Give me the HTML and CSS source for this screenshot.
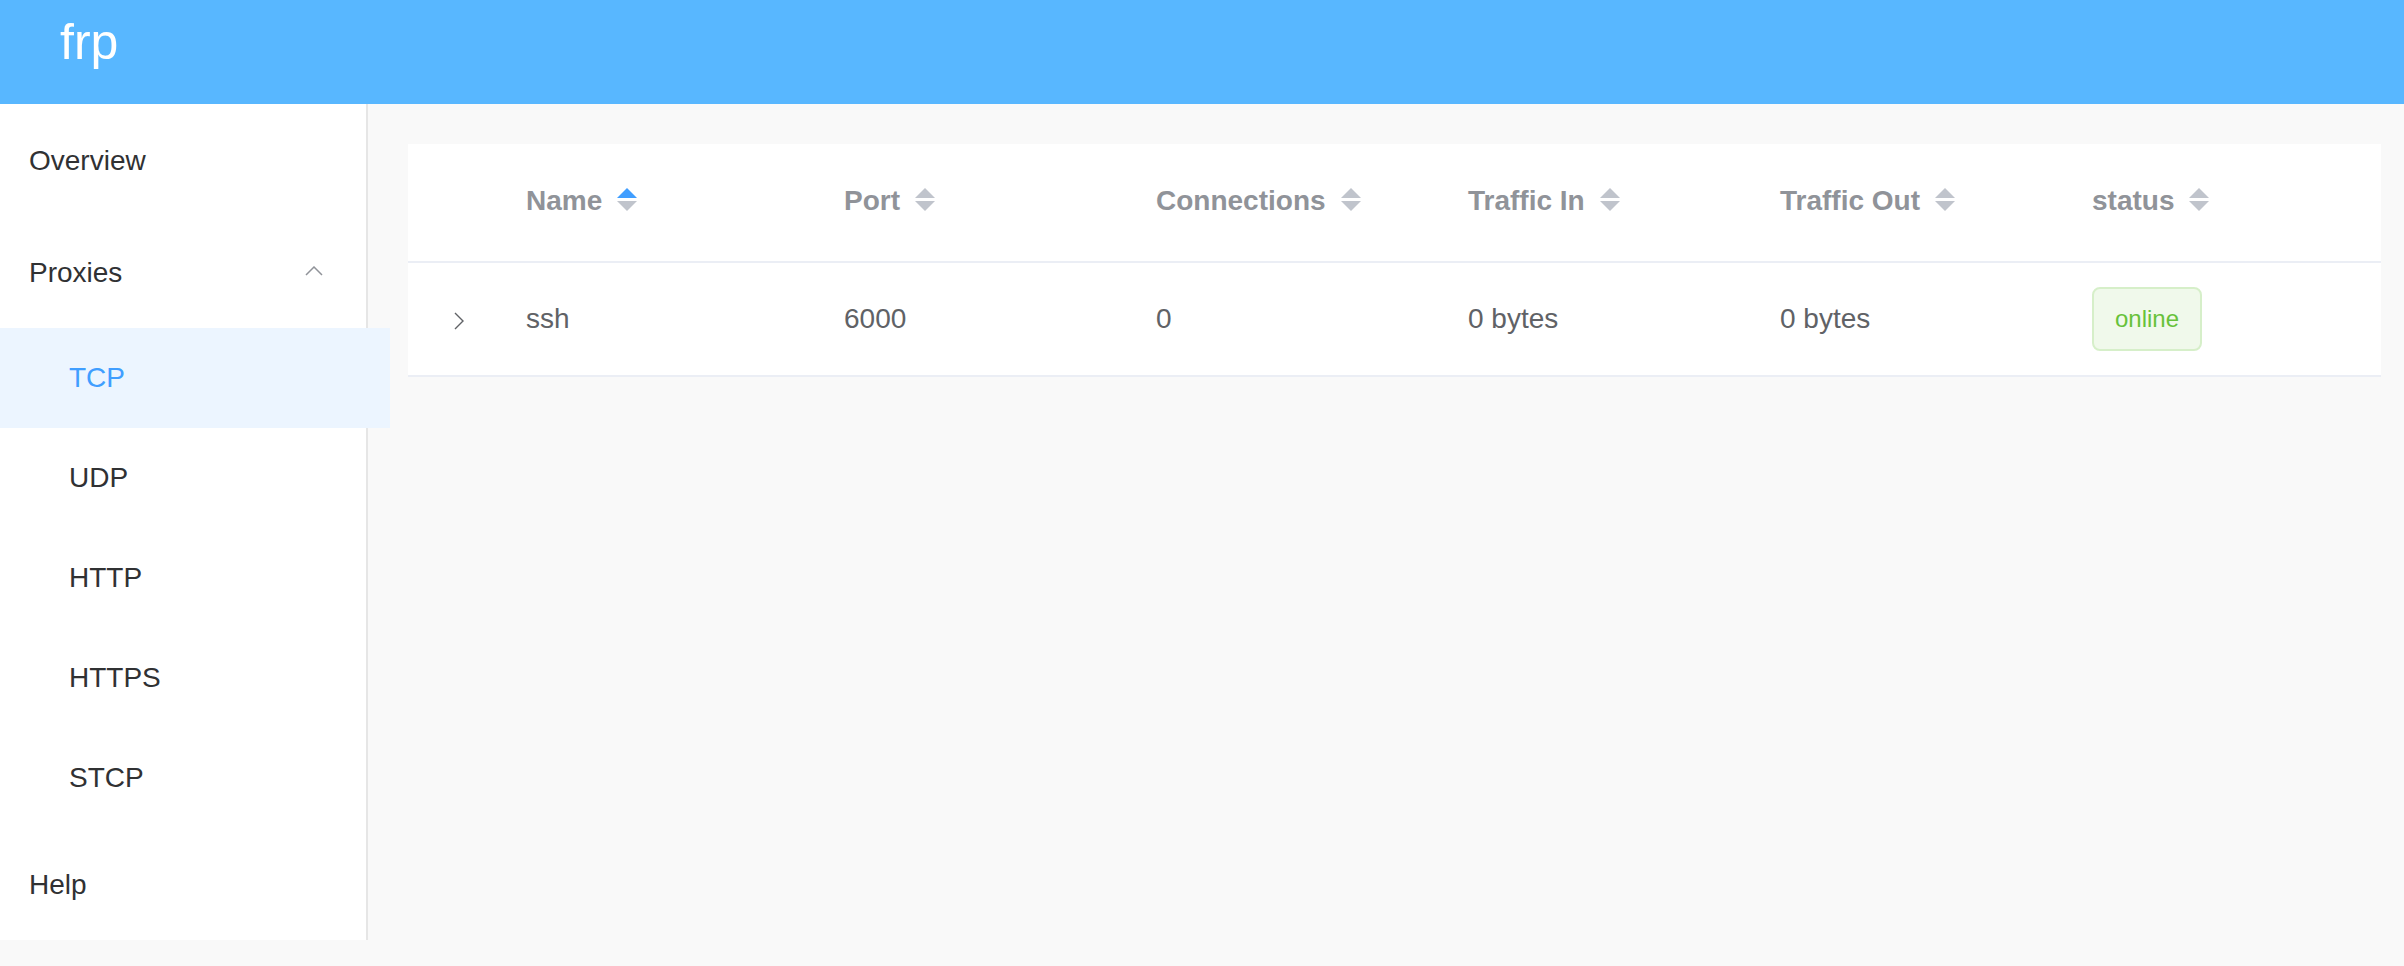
FILE: index.html
```html
<!DOCTYPE html>
<html lang="en">
<head>
<meta charset="utf-8">
<title>frp</title>
<link rel="stylesheet" href="styles.css">
</head>
<body>
<header class="topbar"><span class="brand">frp</span></header>
<div class="layout">
  <nav class="sidebar">
    <ul class="menu">
      <li class="menu-item">Overview</li>
      <li class="submenu">
        <div class="submenu-title">
          <span>Proxies</span>
          <svg class="submenu-arrow" width="18" height="10" viewBox="0 0 18 10"><path d="M1 9 L9 1 L17 9" fill="none" stroke="#909399" stroke-width="1.5"/></svg>
        </div>
        <ul class="submenu-list">
          <li class="sub-item is-active">TCP</li>
          <li class="sub-item">UDP</li>
          <li class="sub-item">HTTP</li>
          <li class="sub-item">HTTPS</li>
          <li class="sub-item">STCP</li>
        </ul>
      </li>
      <li class="menu-item">Help</li>
    </ul>
  </nav>
  <main class="content">
    <div class="card">
      <table class="proxy-table">
        <thead>
          <tr>
            <th class="col-expand"></th>
            <th class="col-name"><span class="th-cell">Name<svg class="sort" width="20" height="24" viewBox="0 0 20 24"><polygon points="0,10 10,0 20,10" fill="#409EFF"/><polygon points="0,13 20,13 10,23" fill="#C0C4CC"/></svg></span></th>
            <th class="col-data"><span class="th-cell">Port<svg class="sort" width="20" height="24" viewBox="0 0 20 24"><polygon points="0,10 10,0 20,10" fill="#C0C4CC"/><polygon points="0,13 20,13 10,23" fill="#C0C4CC"/></svg></span></th>
            <th class="col-data"><span class="th-cell">Connections<svg class="sort" width="20" height="24" viewBox="0 0 20 24"><polygon points="0,10 10,0 20,10" fill="#C0C4CC"/><polygon points="0,13 20,13 10,23" fill="#C0C4CC"/></svg></span></th>
            <th class="col-data"><span class="th-cell">Traffic In<svg class="sort" width="20" height="24" viewBox="0 0 20 24"><polygon points="0,10 10,0 20,10" fill="#C0C4CC"/><polygon points="0,13 20,13 10,23" fill="#C0C4CC"/></svg></span></th>
            <th class="col-data"><span class="th-cell">Traffic Out<svg class="sort" width="20" height="24" viewBox="0 0 20 24"><polygon points="0,10 10,0 20,10" fill="#C0C4CC"/><polygon points="0,13 20,13 10,23" fill="#C0C4CC"/></svg></span></th>
            <th class="col-last"><span class="th-cell">status<svg class="sort" width="20" height="24" viewBox="0 0 20 24"><polygon points="0,10 10,0 20,10" fill="#C0C4CC"/><polygon points="0,13 20,13 10,23" fill="#C0C4CC"/></svg></span></th>
          </tr>
        </thead>
        <tbody>
          <tr>
            <td class="expand-cell"><svg class="expand-icon" width="10" height="18" viewBox="0 0 10 18"><path d="M1 1 L9 9 L1 17" fill="none" stroke="#606266" stroke-width="1.4"/></svg></td>
            <td>ssh</td>
            <td>6000</td>
            <td>0</td>
            <td>0 bytes</td>
            <td>0 bytes</td>
            <td><span class="tag tag-success">online</span></td>
          </tr>
        </tbody>
      </table>
    </div>
  </main>
</div>
</body>
</html>
```

FILE: styles.css
```css
* {
  box-sizing: border-box;
}

html, body {
  margin: 0;
  padding: 0;
}

body {
  background: #f9f9f9;
  font-family: "Liberation Sans", Arial, sans-serif;
  color: #303133;
  min-height: 966px;
}

.topbar {
  height: 104px;
  background: #58b7ff;
  padding: 14px 0 0 60px;
}

.brand {
  display: block;
  color: #ffffff;
  font-size: 50px;
  line-height: 56px;
}

.layout {
  display: flex;
  align-items: flex-start;
}

.sidebar {
  flex: 0 0 368px;
  width: 368px;
  background: #ffffff;
  border-right: 2px solid #e6e6e6;
}

.menu,
.submenu-list {
  list-style: none;
  margin: 0;
  padding: 0;
}

.menu-item {
  height: 112px;
  line-height: 114px;
  padding-left: 29px;
  font-size: 28px;
  color: #303133;
}

.submenu-title {
  height: 112px;
  display: flex;
  align-items: center;
  justify-content: space-between;
  padding: 2px 43px 0 29px;
  font-size: 28px;
  color: #303133;
}

.submenu-arrow {
  display: block;
  margin-top: -4px;
}

.sub-item {
  width: 390px;
  height: 100px;
  line-height: 100px;
  padding-left: 69px;
  font-size: 28px;
  color: #303133;
}

.sub-item.is-active {
  background: #ecf5ff;
  color: #409eff;
  position: relative;
}

.content {
  flex: 1;
  padding: 40px 23px 0 40px;
}

.card {
  background: #ffffff;
}

.proxy-table {
  width: 100%;
  border-collapse: collapse;
  table-layout: fixed;
}

.proxy-table th,
.proxy-table td {
  padding: 0 20px;
  text-align: left;
  white-space: nowrap;
  overflow: hidden;
}

.proxy-table th {
  height: 118px;
  padding-bottom: 4px;
  border-bottom: 2px solid #ebeef5;
  font-size: 28px;
  font-weight: bold;
  color: #909399;
}

.proxy-table td {
  height: 114px;
  border-bottom: 2px solid #ebeef5;
  font-size: 28px;
  color: #606266;
}

.col-expand {
  width: 98px;
}

.col-name {
  width: 318px;
}

.col-data {
  width: 312px;
}

.th-cell {
  display: inline-flex;
  align-items: center;
}

.sort {
  display: block;
  margin-left: 15px;
  margin-top: -1px;
}

.proxy-table td.expand-cell {
  padding: 0;
  text-align: center;
}

.expand-icon {
  display: inline-block;
  vertical-align: middle;
  margin-left: 4px;
}

.tag {
  display: inline-block;
  height: 64px;
  line-height: 60px;
  padding: 0 21px;
  border-radius: 8px;
  font-size: 24px;
}

.tag-success {
  background: #f0f9eb;
  border: 2px solid #d6efc9;
  color: #67c23a;
}
```
